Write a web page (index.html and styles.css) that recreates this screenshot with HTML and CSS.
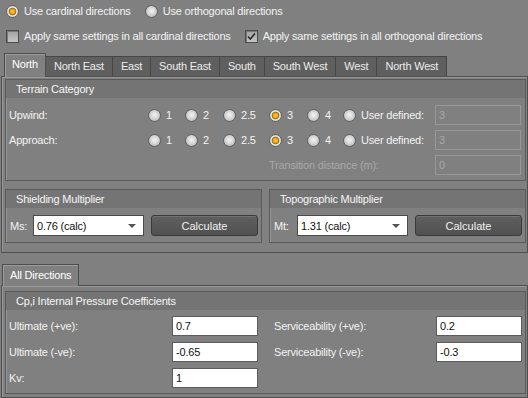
FILE: index.html
```html
<!DOCTYPE html>
<html lang="en">

<head>
    <meta charset="UTF-8">
    <title>Wind Settings</title>
    <link rel="stylesheet" href="styles.css">
</head>

<body>
    <div class="mode">
        <label class="opt"><span class="radio on"></span>Use cardinal directions</label>
        <label class="opt"><span class="radio"></span>Use orthogonal directions</label>
    </div>
    <div class="apply">
        <label class="opt"><span class="check"></span>Apply same settings in all cardinal directions</label>
        <label class="opt">
            <span class="check">
                <svg width="11" height="11" viewBox="0 0 11 11"><path d="M2 5.5 L4.3 8 L9 2.5" fill="none" stroke="#2b2b2b" stroke-width="1.6"/></svg>
            </span>Apply same settings in all orthogonal directions
        </label>
    </div>

    <div class="tabs">
        <div class="tab active">North</div>
        <div class="tab">North East</div>
        <div class="tab">East</div>
        <div class="tab">South East</div>
        <div class="tab">South</div>
        <div class="tab">South West</div>
        <div class="tab">West</div>
        <div class="tab">North West</div>
    </div>
    <div class="pane">
        <div class="group">
            <div class="group-title">Terrain Category</div>
            <div class="terrain">
                <span class="lbl">Upwind:</span>
                <label class="opt"><span class="radio"></span>1</label>
                <label class="opt"><span class="radio"></span>2</label>
                <label class="opt"><span class="radio"></span>2.5</label>
                <label class="opt"><span class="radio on"></span>3</label>
                <label class="opt"><span class="radio"></span>4</label>
                <label class="opt"><span class="radio"></span>User defined:</label>
                <div class="field off">3</div>

                <span class="lbl">Approach:</span>
                <label class="opt"><span class="radio"></span>1</label>
                <label class="opt"><span class="radio"></span>2</label>
                <label class="opt"><span class="radio"></span>2.5</label>
                <label class="opt"><span class="radio on"></span>3</label>
                <label class="opt"><span class="radio"></span>4</label>
                <label class="opt"><span class="radio"></span>User defined:</label>
                <div class="field off">3</div>

                <span class="lbl muted transition">Transition distance (m):</span>
                <div class="field off">0</div>
            </div>
        </div>

        <div class="multipliers">
            <div class="group">
                <div class="group-title">Shielding Multiplier</div>
                <div class="mult-row">
                    <span class="mult-lbl">Ms:</span>
                    <div class="combo">0.76 (calc)<span class="arrow"></span></div>
                    <button class="btn">Calculate</button>
                </div>
            </div>
            <div class="group">
                <div class="group-title">Topographic Multiplier</div>
                <div class="mult-row">
                    <span class="mult-lbl">Mt:</span>
                    <div class="combo">1.31 (calc)<span class="arrow"></span></div>
                    <button class="btn">Calculate</button>
                </div>
            </div>
        </div>
    </div>

    <div class="tabs lower">
        <div class="tab active">All Directions</div>
    </div>
    <div class="pane lower-pane">
        <div class="group">
            <div class="group-title">Cp,i Internal Pressure Coefficients</div>
            <div class="coeffs">
                <span class="lbl">Ultimate (+ve):</span>
                <div class="field">0.7</div>
                <span></span>
                <span class="lbl">Serviceability (+ve):</span>
                <div class="field">0.2</div>

                <span class="lbl">Ultimate (-ve):</span>
                <div class="field">-0.65</div>
                <span></span>
                <span class="lbl">Serviceability (-ve):</span>
                <div class="field">-0.3</div>

                <span class="lbl">Kv:</span>
                <div class="field">1</div>
            </div>
        </div>
    </div>
</body>

</html>
```

FILE: styles.css
```css
* {
    margin: 0;
    padding: 0;
    box-sizing: border-box;
}

body {
    width: 528px;
    height: 398px;
    overflow: hidden;
    background: #808080;
    color: #f3f3f3;
    font-family: 'Liberation Sans', Arial, sans-serif;
    font-size: 11px;
    letter-spacing: -0.2px;
}

/* top options */
.mode,
.apply {
    display: flex;
    align-items: center;
    gap: 14px;
    padding-left: 6px;
}

.mode {
    height: 22px;
}

.apply {
    height: 28px;
}

.opt {
    display: flex;
    align-items: center;
    gap: 5px;
    white-space: nowrap;
}

.radio {
    flex: none;
    width: 13px;
    height: 13px;
    border-radius: 50%;
    border: 1px solid #606060;
    background: radial-gradient(circle at 50% 45%, #f4f4f4 0, #d6d6d6 45%, #a8a8a8 100%);
}

.radio.on {
    background: radial-gradient(circle, #ffc928 0, #f2a200 2.6px, #7a6030 3.4px, #e6e6e6 4.2px, #b8b8b8 100%);
}

.check {
    flex: none;
    width: 13px;
    height: 13px;
    border: 1px solid #4c4c4c;
    background: linear-gradient(#a2a2a2, #c4c4c4);
    box-shadow: inset 1px 1px 0 #777;
}

.check svg {
    display: block;
}

/* tabs */
.tabs {
    display: flex;
    align-items: flex-end;
    height: 26px;
    padding-left: 4px;
}

.tab {
    height: 20px;
    line-height: 19px;
    padding: 0 8px;
    background: #5f5f5f;
    border: 1px solid #464646;
    border-bottom: none;
    border-left: none;
    color: #ececec;
}

.tab.active {
    position: relative;
    z-index: 1;
    height: 24px;
    line-height: 21px;
    margin-bottom: -1px;
    padding: 0 7px;
    background: #808080;
    border: 1px solid #4e4e4e;
    border-bottom: none;
    box-shadow: inset 1px 1px 0 #9c9c9c;
    color: #fff;
}

.pane {
    margin-left: 1px;
    padding: 2px 1px 9px 3px;
    border: 1px solid #4f4f4f;
    box-shadow: inset 1px 1px 0 #979797;
}

/* group boxes */
.group {
    border: 1px solid #5a5a5a;
    box-shadow: inset 1px 1px 0 #959595;
}

.group-title {
    height: 18px;
    line-height: 18px;
    padding-left: 10px;
    background: #747474;
    color: #f6f6f6;
}

.terrain {
    display: grid;
    grid-template-columns: 139px 37px 38px 46px 38px 36px 92px 86px;
    grid-auto-rows: 20px;
    row-gap: 5px;
    align-items: center;
    padding: 7px 0 5px 3px;
}

.lbl {
    white-space: nowrap;
}

.muted {
    color: #a9a9a9;
}

.transition {
    grid-column: 5 / 8;
}

.field {
    height: 20px;
    line-height: 18px;
    padding-left: 3px;
    background: #fff;
    border: 1px solid #5c5c5c;
    color: #111;
}

.field.off {
    background: #808080;
    border-color: #979797;
    color: #a8a8a8;
}

.multipliers {
    display: flex;
    gap: 7px;
    margin-top: 8px;
}

.multipliers .group {
    flex: 1;
}

.mult-row {
    display: flex;
    align-items: center;
    gap: 7px;
    padding: 7px 3px 6px 4px;
}

.mult-lbl {
    width: 16px;
}

.combo {
    display: flex;
    align-items: center;
    justify-content: space-between;
    width: 111px;
    height: 21px;
    padding: 0 7px 0 3px;
    background: #fff;
    border: 1px solid #4a4a4a;
    color: #111;
}

.arrow {
    width: 0;
    height: 0;
    border-left: 4px solid transparent;
    border-right: 4px solid transparent;
    border-top: 4px solid #555;
}

.btn {
    flex: 1;
    height: 21px;
    border: 1px solid #3a3a3a;
    border-radius: 3px;
    background: linear-gradient(#5f5f5f, #515151);
    box-shadow: inset 0 1px 0 #727272;
    color: #f2f2f2;
    font: inherit;
}

/* all directions */
.tabs.lower {
    height: 22px;
    margin-top: 10px;
    padding-left: 2px;
}

.tabs.lower .tab.active {
    height: 22px;
    line-height: 20px;
}

.lower-pane {
    padding: 5px 1px 3px 3px;
}

.coeffs {
    display: grid;
    grid-template-columns: 163px 86px 16px 162px 86px;
    grid-auto-rows: 20px;
    row-gap: 6px;
    align-items: center;
    padding: 6px 0 5px 3px;
}
```
